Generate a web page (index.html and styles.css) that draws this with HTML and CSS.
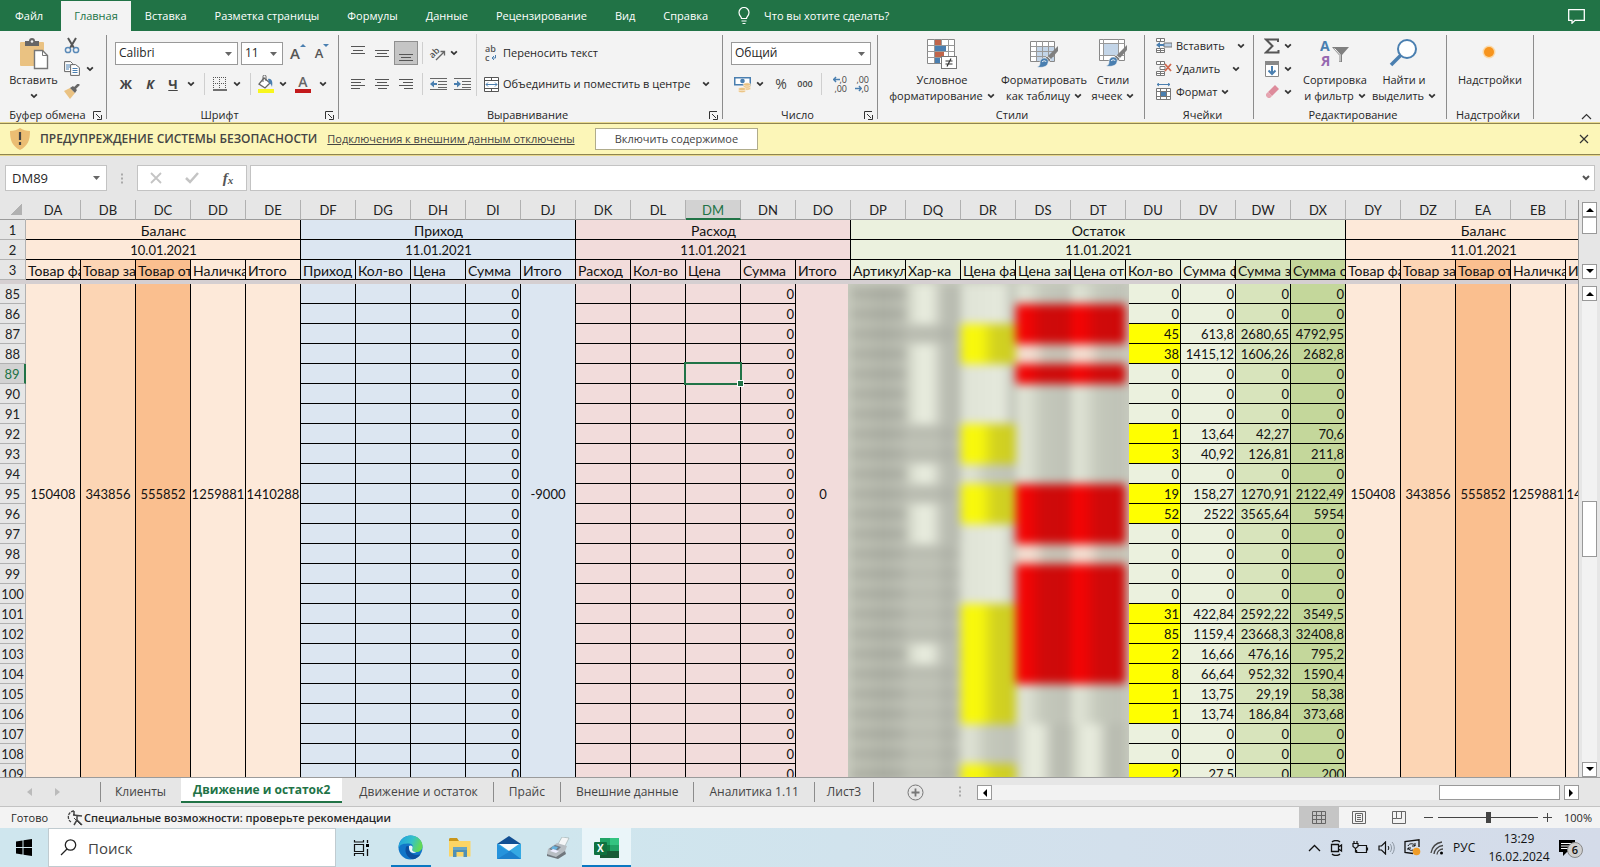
FILE: index.html
```html
<!DOCTYPE html>
<html lang="ru">
<head>
<meta charset="utf-8">
<title>Движение и остаток2 - Excel</title>
<link rel="stylesheet" href="styles.css">
</head>
<body>
<svg class="sprite" aria-hidden="true">
  <symbol id="chev" viewBox="0 0 7 5"><path d="M1 1l2.500 2.500L6 1" fill="none" stroke="#333" stroke-width="1.500"/></symbol>
  <symbol id="caret" viewBox="0 0 7 4"><path d="M0 0h7L3.500 4z" fill="#666"/></symbol>
  <symbol id="launch" viewBox="0 0 9 9"><path d="M.5 8V.5H8M3 3l4 4M8.500 4v4.500H4" fill="none" stroke="#333"/></symbol>
  <symbol id="brush" viewBox="0 0 24 24"><path d="M22 1v5l-7 8-3-3z" fill="#7f7f7f"/><path d="M11 11l4 4-2 2-4-4z" fill="#7f7f7f" stroke="#f3f3f3" stroke-width=".7"/><path d="M8 13c3 0 5 2 4 5-1 4-6 5-11 4 3-1 3-3 3-5s2-4 4-4z" fill="#4a7fb0" stroke="#f3f3f3" stroke-width=".6"/><path d="M6 17c2-2 4-1 4 0" stroke="#fff" fill="none"/></symbol>
</svg>

<nav class="tabs">
  <button class="tab file">Файл</button>
  <button class="tab active">Главная</button>
  <button class="tab">Вставка</button>
  <button class="tab">Разметка страницы</button>
  <button class="tab">Формулы</button>
  <button class="tab">Данные</button>
  <button class="tab">Рецензирование</button>
  <button class="tab">Вид</button>
  <button class="tab">Справка</button>
  <button class="tab tell"><svg width="12" height="18" viewBox="0 0 12 18"><path d="M3.500 11.500C3.500 9.500 1 9 1 5.500a5 5 0 0 1 10 0c0 3.500-2.500 4-2.500 6zM3.500 14h5M4.500 16.500h3" fill="none" stroke="#fff" stroke-width="1.200"/></svg>Что вы хотите сделать?</button>
  <button class="tab comment" aria-label="Примечания"><svg width="17" height="15" viewBox="0 0 17 15"><path d="M.7.7h15.600v10.600H7L4 14.200v-2.900H.7z" fill="none" stroke="#fff" stroke-width="1.300"/></svg></button>
</nav>

<section class="ribbon">
  <div class="group g-clip">
    <div class="body">
      <button class="big w-paste">
        <svg width="30" height="32" viewBox="0 0 30 32"><rect x="1" y="4" width="24" height="24" rx="1" fill="#eac282"/><path d="M6 8V3h4a3 3 0 0 1 6 0h4v5z" fill="#666"/><circle cx="13" cy="3.500" r="1.300" fill="#f3f3f3"/><path d="M15.500 12.500h8l5 5v13h-13z" fill="#fff" stroke="#777" stroke-width="1.400"/><path d="M23.500 12.500v5h5" fill="none" stroke="#777"/></svg>
        <span>Вставить</span><svg class="chev"><use href="#chev"/></svg>
      </button>
      <div class="stack">
        <button aria-label="Вырезать"><svg width="16" height="17" viewBox="0 0 16 17"><path d="M4 1l6 10M12 1L6 11" stroke="#555" stroke-width="2" fill="none"/><circle cx="4" cy="13" r="2.600" fill="none" stroke="#5a8ab8" stroke-width="1.500"/><circle cx="12" cy="13" r="2.600" fill="none" stroke="#5a8ab8" stroke-width="1.500"/></svg></button>
        <button aria-label="Копировать"><svg width="16" height="15" viewBox="0 0 16 15"><path d="M.6.6h6l2 2v8h-8z" fill="#fff" stroke="#666"/><path d="M2 4h4M2 6h4M2 8h3" stroke="#4a7fb0"/><path d="M6.600 3.600h5l3.800 3v7.800H6.600z" fill="#fff" stroke="#666"/><path d="M8.500 7.500h5M8.500 9.500h5M8.500 11.500h5" stroke="#4a7fb0"/></svg><svg class="chev"><use href="#chev"/></svg></button>
        <button aria-label="Формат по образцу"><svg width="16" height="15" viewBox="0 0 16 15"><path d="M0 7l6-3 5 5-5 6z" fill="#eac282"/><path d="M6 4l5 5 2-3-4-4z" fill="#666"/><path d="M10 5l5-5" stroke="#666" stroke-width="2.500"/></svg></button>
      </div>
    </div>
    <div class="title"><span>Буфер обмена</span><svg class="launch"><use href="#launch"/></svg></div>
  </div>

  <div class="group g-font">
    <div class="rows">
      <div class="row top lead">
        <label class="pick p-font"><select aria-label="Шрифт"><option>Calibri</option></select><svg class="caret"><use href="#caret"/></svg></label>
        <label class="pick p-size"><select aria-label="Размер шрифта"><option>11</option></select><svg class="caret"><use href="#caret"/></svg></label>
        <div class="row"><button class="b24 grow" aria-label="Увеличить размер шрифта">A<svg width="6" height="4" viewBox="0 0 6 4"><path d="M3 0l3 3H0z" fill="#4a7fb0"/></svg></button><button class="b24 grow small" aria-label="Уменьшить размер шрифта">A<svg width="6" height="4" viewBox="0 0 6 4"><path d="M3 3l3-3H0z" fill="#4a7fb0"/></svg></button></div>
      </div>
      <div class="row low">
        <button class="b24 glyph">Ж</button><button class="b24 glyph it">К</button><button class="b22 glyph un">Ч</button><button class="b14" aria-label="Ещё"><svg class="chev"><use href="#chev"/></svg></button>
        <i class="sep s12"></i>
        <button class="b20" aria-label="Границы"><svg width="14" height="14" viewBox="0 0 14 14"><path d="M.5 0v12M4 6.500h9M6.500 0v12M13 .5H0M12.500 0v12M0 6.500h3" stroke="#555" stroke-dasharray="1 1"/><path d="M0 13h14" stroke="#444" stroke-width="1.500"/></svg></button><button class="b14" aria-label="Ещё"><svg class="chev"><use href="#chev"/></svg></button>
        <i class="sep s12"></i>
        <button class="b20" aria-label="Цвет заливки"><svg width="18" height="18" viewBox="0 0 18 18"><path d="M7 3l6 5-5 5-6-4z" fill="#fff" stroke="#666" stroke-width="1.300"/><path d="M6 7V1.500a1.500 1.500 0 0 1 3 0V6" fill="none" stroke="#666"/><path d="M11 4c4-1 5 3 4 8-1-3-2-4-3-4z" fill="#4a7fb0"/><path d="M1 14h16v4H1z" fill="#f8f61e"/></svg></button><button class="b14" aria-label="Ещё"><svg class="chev"><use href="#chev"/></svg></button>
        <button class="b26 colorA" aria-label="Цвет текста">A</button><button class="b14" aria-label="Ещё"><svg class="chev"><use href="#chev"/></svg></button>
      </div>
    </div>
    <div class="title"><span>Шрифт</span><svg class="launch"><use href="#launch"/></svg></div>
  </div>

  <div class="group g-align">
    <div class="body">
      <div class="rows split">
        <div class="row top">
          <button class="b24" aria-label="По верхнему краю"><svg width="14" height="16"><path d="M0 1.500h14M2 5.500h10M0 8.500h14" stroke="#555"/></svg></button>
          <button class="b24" aria-label="По середине"><svg width="14" height="16"><path d="M0 5.500h14M2 8.500h10M0 11.500h14" stroke="#555"/></svg></button>
          <button class="b24 on" aria-label="По нижнему краю"><svg width="14" height="16"><path d="M0 9.500h14M2 12.500h10M0 15.500h14" stroke="#555"/></svg></button>
          <i class="sep s8"></i>
          <button class="b22" aria-label="Ориентация"><svg width="17" height="16" viewBox="0 0 17 16"><text x="0" y="11" transform="rotate(-45 5 8)" class="svgtext">ab</text><path d="M7 15l8-8M11.500 6.500H15.500V10.500" fill="none" stroke="#666" stroke-width="1.300"/></svg></button><button class="b12" aria-label="Ещё"><svg class="chev"><use href="#chev"/></svg></button>
        </div>
        <div class="row low">
          <button class="b24" aria-label="По левому краю"><svg width="14" height="12"><path d="M0 1.500h14M0 4.500h10M0 7.500h14M0 10.500h9" stroke="#555"/></svg></button>
          <button class="b24" aria-label="По центру"><svg width="14" height="12"><path d="M0 1.500h14M2 4.500h10M0 7.500h14M3 10.500h9" stroke="#555"/></svg></button>
          <button class="b24" aria-label="По правому краю"><svg width="14" height="12"><path d="M0 1.500h14M4 4.500h10M0 7.500h14M5 10.500h9" stroke="#555"/></svg></button>
          <i class="sep s8"></i>
          <button class="b24" aria-label="Уменьшить отступ"><svg width="17" height="14"><path d="M0 1.500h17M8 4.500h9M8 7.500h9M8 10.500h9M0 12.500h17" stroke="#666"/><path d="M0 7l4-3.500V6h3v2H4v2.500z" fill="#4a7fb0"/></svg></button>
          <button class="b24" aria-label="Увеличить отступ"><svg width="17" height="14"><path d="M0 1.500h17M8 4.500h9M8 7.500h9M8 10.500h9M0 12.500h17" stroke="#666"/><path d="M7 7L3 3.500V6H0v2h3v2.500z" fill="#4a7fb0"/></svg></button>
        </div>
      </div>
      <div class="rows wide">
        <div class="row top"><button class="labelled"><svg width="15" height="18" viewBox="0 0 15 18"><text x="1" y="8" class="svgtext">ab</text><text x="1" y="17" class="svgtext">c</text><path d="M11.500 11v3H8M10 12l-2 2 2 2" fill="none" stroke="#4a7fb0"/></svg>Переносить текст</button></div>
        <div class="row low"><button class="labelled"><svg width="15" height="15" viewBox="0 0 15 15"><path d="M.5.5h14v14H.5zM.5 3.500h14M.5 11.500h14M7.500 0v3M7.500 12v3" fill="#fff" stroke="#555"/><path d="M2 7.500h11M4 5.500l-2 2 2 2M11 5.500l2 2-2 2" fill="none" stroke="#4a7fb0"/></svg>Объединить и поместить в центре<svg class="chev far"><use href="#chev"/></svg></button></div>
      </div>
    </div>
    <div class="title"><span>Выравнивание</span><svg class="launch"><use href="#launch"/></svg></div>
  </div>

  <div class="group g-num">
    <div class="rows">
      <div class="row top"><label class="pick p-num"><select aria-label="Числовой формат"><option>Общий</option></select><svg class="caret"><use href="#caret"/></svg></label></div>
      <div class="row low">
        <button class="b22" aria-label="Финансовый формат"><svg width="17" height="17" viewBox="0 0 17 17"><path d="M.7 1.700h15.600v7H.7z" fill="#fff" stroke="#4a7fb0" stroke-width="1.600"/><circle cx="8.500" cy="5" r="2.300" fill="#4a7fb0"/><g fill="#eac282" stroke="#fff" stroke-width=".5"><ellipse cx="13" cy="12.500" rx="3.700" ry="1.700"/><ellipse cx="13" cy="10.500" rx="3.700" ry="1.700"/><ellipse cx="13" cy="8.500" rx="3.700" ry="1.700"/><ellipse cx="8" cy="15" rx="3.700" ry="1.700"/><ellipse cx="8" cy="13" rx="3.700" ry="1.700"/></g></svg></button><button class="b14" aria-label="Ещё"><svg class="chev"><use href="#chev"/></svg></button><button class="b28 pct">%</button><button class="b20 ooo">000</button>
        <i class="sep s12"></i>
        <button class="b22 dec" aria-label="Увеличить разрядность"><span><svg width="7" height="7"><path d="M0 3.500h7M3 1L.7 3.500 3 6" fill="none" stroke="#4a7fb0" stroke-width="1.500"/></svg>,0</span><span>,00</span></button>
        <button class="b22 dec" aria-label="Уменьшить разрядность"><span>,00</span><span><svg width="7" height="7"><path d="M0 3.500h6M4 1l2.300 2.500L4 6" fill="none" stroke="#4a7fb0" stroke-width="1.500"/></svg>,0</span></button>
      </div>
    </div>
    <div class="title"><span>Число</span><svg class="launch"><use href="#launch"/></svg></div>
  </div>

  <div class="group g-style">
    <div class="body">
      <button class="big w-cond"><svg width="30" height="32" viewBox="0 0 30 32"><path d="M.5 1.500h27v24H.5z" fill="#fff" stroke="#888"/><path d="M.5 7.500h27M.5 13.500h27M.5 19.500h27M7.500 1v24M14.500 1v24M21.500 1v24" stroke="#999"/><path d="M8 2h6v5H8zM8 14h9v5H8z" fill="#c0654b"/><path d="M8 8h11v5H8zM8 20h5v5H8z" fill="#4a7fb0"/><rect x="14.500" y="18.500" width="15" height="12" fill="#fff" stroke="#777"/><path d="M18.500 23h7M18.500 26h7M24 20.500l-4 8" stroke="#333" stroke-width="1.200"/></svg><span>Условное</span><span>форматирование <svg class="chev"><use href="#chev"/></svg></span></button>
      <button class="big w-tbl"><svg width="30" height="32" viewBox="0 0 30 32"><path d="M1.500 3.500h24v20h-24z" fill="#fff" stroke="#888"/><path d="M8 9h17v14H8z" fill="#c3d5e8"/><path d="M1.500 8.500h24M1.500 13.500h24M1.500 18.500h24M7.500 3v20M13.500 3v20M19.500 3v20" stroke="#999"/><use href="#brush" x="7" y="7" width="24" height="24"/></svg><span>Форматировать</span><span>как таблицу <svg class="chev"><use href="#chev"/></svg></span></button>
      <button class="big w-cell"><svg width="30" height="32" viewBox="0 0 30 32"><path d="M1.500 1.500h25v21h-25z" fill="#fff" stroke="#888"/><path d="M1.500 5.500h25M1.500 17.500h25M5.500 1v21M20.500 1v21" stroke="#999"/><path d="M6 6h14v11H6z" fill="#c3d5e8"/><use href="#brush" x="7" y="6" width="24" height="24"/></svg><span>Стили</span><span>ячеек <svg class="chev"><use href="#chev"/></svg></span></button>
    </div>
    <div class="title"><span>Стили</span></div>
  </div>

  <div class="group g-cells">
    <div class="body"><div class="stack">
      <button><svg width="16" height="17" viewBox="0 0 16 17"><path d="M.5 1.500h8v3h-8zM.5 11.500h8v4h-8zM4.500 1v3M4.500 11v4M.5 13.500h8" fill="#fff" stroke="#777"/><path d="M8 6h8v4H8z" fill="#b9cfe6" stroke="#777"/><path d="M0 8l4-3v2h4v2H4v2z" fill="#4a7fb0"/></svg><span>Вставить</span><svg class="chev far"><use href="#chev"/></svg></button>
      <button><svg width="16" height="17" viewBox="0 0 16 17"><path d="M.5 1.500h8v3h-8zM.5 11.500h8v4h-8zM4.500 1v3M4.500 11v4M.5 13.500h8M4 6.500h5v3H4z" fill="#fff" stroke="#777"/><path d="M9 4l6 7M15 4l-6 7" stroke="#d0694f" stroke-width="1.800"/></svg><span>Удалить</span><svg class="chev far"><use href="#chev"/></svg></button>
      <button><svg width="16" height="17" viewBox="0 0 16 17"><path d="M1 1.500h13M3 0L1 1.500 3 3M12 0l2 1.500L12 3" stroke="#4a7fb0" fill="none"/><path d="M.5 5.500h14v11H.5zM.5 8.500h14M.5 13.500h14M4.500 5v11M10.500 5v11" fill="#fff" stroke="#777"/><path d="M5 9h5v4H5z" fill="#4a7fb0"/></svg><span>Формат</span><svg class="chev"><use href="#chev"/></svg></button>
    </div></div>
    <div class="title"><span>Ячейки</span></div>
  </div>

  <div class="group g-edit">
    <div class="body">
      <div class="stack w-sum">
        <button aria-label="Автосумма"><svg width="16" height="16" viewBox="0 0 16 16"><path d="M14 4V1.500H2L8.500 8 2 14.500h12.500V12" fill="none" stroke="#555" stroke-width="2"/></svg><svg class="chev"><use href="#chev"/></svg></button>
        <button aria-label="Заполнить"><svg width="14" height="16" viewBox="0 0 14 16"><path d="M.5.5h13v15H.5z" fill="#fff" stroke="#888"/><path d="M0 0h14v4H0z" fill="#888"/><path d="M7 5v8M3.500 9.500L7 13l3.500-3.500" fill="none" stroke="#4a7fb0" stroke-width="2"/></svg><svg class="chev"><use href="#chev"/></svg></button>
        <button aria-label="Очистить"><svg width="14" height="14" viewBox="0 0 14 14"><path d="M10 0l4 4-7 7-4-4z" fill="#dd8b9b"/><path d="M3 7l4 4-2 2H3L1 11V9z" fill="#e5a4b0"/></svg><svg class="chev"><use href="#chev"/></svg></button>
      </div>
      <button class="big w-sort"><svg width="30" height="32" viewBox="0 0 30 32"><text x="0" y="13" class="az blue">А</text><text x="1" y="28" class="az purple">Я</text><path d="M12 9h17l-7 8v7h-3v-7z" fill="#7f7f7f"/><path d="M14.500 10.500l5.500 6v7" fill="none" stroke="#fff"/></svg><span>Сортировка</span><span>и фильтр <svg class="chev"><use href="#chev"/></svg></span></button>
      <button class="big w-find"><svg width="30" height="32" viewBox="0 0 30 32"><circle cx="18" cy="11" r="9" fill="#fff" stroke="#4a7fb0" stroke-width="2"/><path d="M11.500 17.500L2 27" stroke="#4a7fb0" stroke-width="3.500"/></svg><span>Найти и</span><span>выделить <svg class="chev"><use href="#chev"/></svg></span></button>
    </div>
    <div class="title"><span>Редактирование</span></div>
  </div>

  <div class="group g-add">
    <div class="body"><button class="big w-add"><svg width="30" height="32" viewBox="0 0 30 32"><circle cx="14" cy="14" r="6.500" fill="#fbd9a8"/><circle cx="14" cy="14" r="5" fill="#f7941d"/></svg><span>Надстройки</span></button></div>
    <div class="title"><span>Надстройки</span></div>
  </div>
  <button class="collapse" aria-label="Свернуть ленту"><svg width="11" height="7" viewBox="0 0 11 7"><path d="M1 6l4.500-4.500L10 6" fill="none" stroke="#333" stroke-width="1.200"/></svg></button>
</section>

<section class="warn">
  <svg width="20" height="22" viewBox="0 0 20 22"><path d="M10 0c3 2 6 3 10 3 0 9-2 15-10 19C2 18 0 12 0 3c4 0 7-1 10-3z" fill="#ebbd73"/><path d="M10 4v8M10 14v3" stroke="#444" stroke-width="2.200"/></svg>
  <b>ПРЕДУПРЕЖДЕНИЕ СИСТЕМЫ БЕЗОПАСНОСТИ</b>
  <a href="#">Подключения к внешним данным отключены</a>
  <button class="enable">Включить содержимое</button>
  <button class="close" aria-label="Закрыть"><svg width="10" height="10"><path d="M1 1l8 8M9 1L1 9" stroke="#333" stroke-width="1.200"/></svg></button>
</section>

<section class="formula">
  <label class="name"><input value="DM89" aria-label="Поле имени"><svg class="caret"><use href="#caret"/></svg></label>
  <span class="dots"></span>
  <div class="fx">
    <button aria-label="Отмена"><svg width="12" height="12"><path d="M1 1l10 10M11 1L1 11" stroke="#c4c4c4" stroke-width="1.800"/></svg></button>
    <button aria-label="Ввод"><svg width="14" height="12"><path d="M1 6l4 4 8-9" fill="none" stroke="#c4c4c4" stroke-width="2.500"/></svg></button>
    <button class="f"><i>f</i><i class="x">x</i></button>
  </div>
  <label class="entry"><input aria-label="Строка формул"><svg width="8" height="6"><path d="M1 1l3 3 3-3" fill="none" stroke="#555" stroke-width="2"/></svg></label>
</section>

<main class="sheet">
  <div class="pane">
    <table class="grid" id="head"></table>
    <div class="freeze"></div>
    <div class="scrolling">
      <table class="grid" id="cells"></table>
      <div class="veil"><div class="smudge" id="smudge"></div></div>
    </div>
  </div>
  <div class="vbars">
    <div class="vbar upper"><button aria-label="Вверх"><svg width="8" height="5"><path d="M0 5l4-4 4 4z"/></svg></button><div class="thumb"></div><div class="space"></div><button aria-label="Вниз"><svg width="8" height="5"><path d="M0 0l4 4 4-4z"/></svg></button></div>
    <div class="vbar lower"><button aria-label="Вверх"><svg width="8" height="5"><path d="M0 5l4-4 4 4z"/></svg></button><div class="space before"></div><div class="thumb"></div><div class="space"></div><button aria-label="Вниз"><svg width="8" height="5"><path d="M0 0l4 4 4-4z"/></svg></button></div>
  </div>
</main>

<nav class="sheets">
  <div class="arrows"><svg width="5" height="8"><path d="M5 0v8L0 4z" fill="#bbb"/></svg><svg width="5" height="8"><path d="M0 0v8l5-4z" fill="#bbb"/></svg></div>
  <button class="first">Клиенты</button>
  <button class="active">Движение и остаток2</button>
  <button class="line next">Движение и остаток</button>
  <button class="line">Прайс</button>
  <button class="line">Внешние данные</button>
  <button class="line">Аналитика 1.11</button>
  <button class="line last">Лист3</button>
  <button class="plus" aria-label="Новый лист"><svg width="17" height="17" viewBox="0 0 17 17"><circle cx="8.500" cy="8.500" r="7.500" fill="none" stroke="#777"/><path d="M8.500 4.500v8M4.500 8.500h8" stroke="#777" stroke-width="1.800"/></svg></button>
  <span class="dots"></span>
  <div class="hbar"><button aria-label="Влево"><svg width="5" height="8"><path d="M5 0v8L1 4z"/></svg></button><div class="space"></div><div class="thumb"></div><button aria-label="Вправо"><svg width="5" height="8"><path d="M0 0v8l4-4z"/></svg></button></div>
</nav>

<footer class="status">
  <span class="ready">Готово</span>
  <button class="access"><svg width="17" height="16" viewBox="0 0 17 16"><path d="M8 1a6 6 0 0 0-3 11" fill="none" stroke="#444" stroke-width="1.300" stroke-dasharray="3 1"/><path d="M7 5l9 1M11 6v4l-3 5M11 10l5 5M8 1v4" stroke="#444" stroke-width="1.500" fill="none"/><path d="M8 8l7 7" stroke="#444"/></svg>Специальные возможности: проверьте рекомендации</button>
  <div class="views">
    <button class="on" aria-label="Обычный"><svg width="14" height="13"><path d="M.5.5h13v12H.5zM.5 4.500h13M.5 8.500h13M4.500 0v12M9.500 0v12" fill="none" stroke="#666"/></svg></button>
    <button aria-label="Разметка страницы"><svg width="14" height="13"><path d="M.5.5h13v12H.5zM3.500 2.500h7v8h-7zM5 4.500h4M5 6.500h4M5 8.500h4" fill="none" stroke="#666"/></svg></button>
    <button aria-label="Страничный режим"><svg width="14" height="13"><path d="M.5.500h13v12H.5zM4.500 0v7.500h5V0M.5 7.500h4" fill="none" stroke="#666"/></svg></button>
  </div>
  <button class="zoomb" aria-label="Уменьшить"><svg width="9" height="9"><path d="M0 4.500h9" stroke="#444"/></svg></button>
  <input class="zoom" type="range" min="0" max="100" value="50" aria-label="Масштаб">
  <button class="zoomb" aria-label="Увеличить"><svg width="9" height="9"><path d="M0 4.500h9M4.500 0v9" stroke="#444"/></svg></button>
  <span class="pc">100%</span>
</footer>

<footer class="taskbar">
  <button class="start" aria-label="Пуск"><svg width="16" height="17" viewBox="0 0 16 17"><path d="M0 2.500L6.500 1.500V8H0zM7.500 1.300L16 0v8H7.500zM0 9h6.500v6.500L0 14.500zM7.500 9H16v8l-8.500-1.300z"/></svg></button>
  <label class="search"><svg width="17" height="17" viewBox="0 0 17 17"><circle cx="10.500" cy="6" r="5.200" fill="none" stroke="#222" stroke-width="1.300"/><path d="M7 10l-6 6" stroke="#222" stroke-width="1.300"/></svg><input placeholder="Поиск" aria-label="Поиск"></label>
  <button class="app" aria-label="Представление задач"><svg width="17" height="16" viewBox="0 0 17 16"><path d="M1.500 4.500h9v7h-9zM1.500 0v2h9V0M1.500 16v-2.500h9V16" fill="none" stroke="#111" stroke-width="1.200"/><path d="M14.500 0v3M14.500 9v7" stroke="#111" stroke-width="1.300"/><path d="M13 4h3v3h-3z"/></svg></button>
  <button class="app open" aria-label="Edge"><svg width="25" height="25" viewBox="0 0 25 25"><defs><linearGradient id="ea" x1="0" x2="1" y1="0" y2=".3"><stop offset="0" stop-color="#1d9fe0"/><stop offset=".6" stop-color="#35c1c9"/><stop offset="1" stop-color="#62d957"/></linearGradient></defs><circle cx="12.500" cy="12.500" r="12" fill="#1176c8"/><path d="M.7 11C2 4 7 .5 12.500.5c7 0 12 5 12 10.500 0 4-3 6-6 6-4 0-5-2-4-3.500 1-2 0-5-3.500-5C6 8.500 2 9 .7 13z" fill="url(#ea)"/><path d="M8 12c-2 6 2 11.500 7 12.200 3-.5 6-2.200 7.500-5C16 21.500 10 18 11 11.500 10 10.500 8.500 11 8 12z" fill="#0b4f9f"/><path d="M11 11c1.500-1.500 4.500 0 3.500 2.500C13.500 15.500 15 17 18.500 17c-4 2.500-8 0-7.500-6z" fill="#e8f6fb"/></svg></button>
  <button class="app" aria-label="Проводник"><svg width="22" height="19" viewBox="0 0 22 19"><path d="M0 1.500C0 .5.500 0 1.500 0H8l2 3H0z" fill="#c9961b"/><path d="M0 3h21.500v15.500H0z" fill="#fbd565"/><path d="M4 9h14v10h-3.500v-5h-7v5H4z" fill="#4f8fb3"/><path d="M4 9h14v3H4z" fill="#67a5c4"/></svg></button>
  <button class="app" aria-label="Почта"><svg width="24" height="23" viewBox="0 0 24 23"><path d="M0 8l12-8 12 8v3H0z" fill="#124f93"/><path d="M0 8v15h24V8z" fill="#35a9e3"/><path d="M0 23l12-9 12 9z" fill="#1c80cc"/><path d="M0 8l12 8L0 23z" fill="#2593dc"/><path d="M2 8h20l-10 7z" fill="#f8fbfd"/></svg></button>
  <button class="app" aria-label="Факс"><svg width="24" height="22" viewBox="0 0 24 22"><path d="M12 7l4-7 7 1-5 10z" fill="#f4f6f7" stroke="#9aa" stroke-width=".6"/><path d="M2 12l9-6 10 3-3 8-7 4-10-4z" fill="#b8bec3"/><path d="M3 12l6-4 6 2-5 5z" fill="#6f7b86"/><path d="M7 9l5 1-2 3-5-1z" fill="#67b2dd"/><path d="M1 17l9 3 9-6 1 3-8 5L1 19z" fill="#70777d"/><path d="M4 14l6 2 3-2-6-2z" fill="#eef"/></svg></button>
  <button class="app open cur" aria-label="Excel"><svg width="25" height="22" viewBox="0 0 25 22"><path d="M6 1h19v20H6z" fill="#107c41"/><path d="M6 1h10v7H6z" fill="#21a366"/><path d="M16 1h9v7h-9z" fill="#33c481"/><path d="M16 8h9v6h-9z" fill="#21a366"/><path d="M6 14h19v7H6z" fill="#185c37"/><rect y="5" width="13" height="13" rx="1" fill="#107240"/><text x="3" y="15" class="xl">X</text></svg></button>
  <div class="tray">
    <svg width="13" height="8" viewBox="0 0 13 8"><path d="M1 7l5.500-5.500L12 7" fill="none" stroke="#111" stroke-width="1.300"/></svg>
    <svg width="13" height="16" viewBox="0 0 13 16"><path d="M1.500 4.500h7v7h-7zM8.500 7l3-2v6l-3-2M2 2C4 0 8 0 10 2M2 14c2 2 6 2 8 0" fill="none" stroke="#111" stroke-width="1.300"/></svg>
    <svg width="17" height="13" viewBox="0 0 17 13"><path d="M6 4.500h8.500v7H4.500V9M15.500 6.500v3M1 2.500h5v3L3.500 7.500 1 5.500zM2 0v2M5 0v2M3.500 8v3h2" fill="none" stroke="#111" stroke-width="1.200"/></svg>
    <svg width="17" height="14" viewBox="0 0 17 14"><path d="M1 5h2.500L7.500 1v12l-4-4H1z" fill="none" stroke="#111" stroke-width="1.200"/><path d="M10 5c1 1 1 3 0 4" fill="none" stroke="#111"/><path d="M12 3c2 2 2 6 0 8M14 1c3 3 3 9 0 12" fill="none" stroke="#8b95a0"/></svg>
    <svg width="17" height="17" viewBox="0 0 17 17"><path d="M9 14.500l-8-1v-11L15 .8V8" fill="none" stroke="#111" stroke-width="1.300"/><path d="M4 7c1-3 6-3 7 0M11 4v3H8M4 11V9h3M4 9c1 2 3 3 5 2" fill="none" stroke="#111"/><circle cx="12.500" cy="12.500" r="3.800" fill="#ef9c28"/></svg>
    <svg width="14" height="14" viewBox="0 0 14 14"><path d="M1 12C2 6 6 2 12 1M4 13c0-4 4-8 9-8.500M7 13.500c0-3 3-5.500 6-5.500" fill="none" stroke="#444" stroke-width="1.300"/><circle cx="11.500" cy="12" r="1.500"/></svg>
    <span class="lang">РУС</span>
    <div class="clock"><span>13:29</span><span>16.02.2024</span></div>
    <div class="note"><svg width="16" height="16" viewBox="0 0 16 16"><path d="M0 0h16v12H8l-4 4v-4H0z"/><path d="M2 3.500h12M2 6h12M2 8.500h8" stroke="#fff"/></svg><span class="badge">6</span></div>
  </div>
</footer>
<script src="app.js"></script>
</body>
</html>
```

FILE: styles.css
```css
* { box-sizing: border-box; }
body {
  margin: 0; height: 100vh; display: flex; flex-direction: column; overflow: hidden;
  font: 11px/16px "Open Sans", "Noto Sans", sans-serif; color: #262626; background: #e6e6e6;
}
button { font: inherit; color: inherit; background: none; border: 0; padding: 0; margin: 0; white-space: nowrap; }
input, select { font: inherit; color: inherit; border: 0; padding: 0; margin: 0; background: none; outline: 0; min-width: 0; }
svg { flex: none; display: block; }
.sprite { position: absolute; width: 0; height: 0; }
.chev { width: 8px; height: 6px; }
.caret { width: 7px; height: 4px; }
.launch { width: 9px; height: 9px; }
.svgtext { font: 600 9px "Open Sans", sans-serif; fill: #555; }

.tabs { flex: none; height: 31px; background: #217346; color: #fff; display: flex; padding-top: 1px; }
.tab { padding: 0 14px; }
.tab.file { padding: 0 18px 0 15px; }
.tab.active { background: #f3f3f3; color: #217346; padding: 0 13px; }
.tab.tell { display: flex; align-items: center; gap: 14px; padding-left: 16px; }
.tab.comment { margin-left: auto; padding-right: 15px; }

.ribbon { flex: none; height: 92px; background: #f3f3f3; display: flex; padding-top: 3px; }
.group { display: flex; flex-direction: column; padding: 0 0 0 7px; position: relative; }
.group::after { content: ""; position: absolute; right: 0; top: 1px; bottom: 4px; width: 1px; background: #8c8c8c; }
.body { flex: 1; display: flex; align-items: flex-start; }
.rows { flex: 1; }
.title { height: 16px; display: flex; align-items: center; padding-right: 5px; }
.title span { flex: 1; text-align: center; }
.row { display: flex; align-items: center; }
.row.top { height: 38px; }
.row.low { height: 24px; }
.row button { height: 24px; display: flex; align-items: center; justify-content: center; flex: none; }
.lead { gap: 3px; padding-left: 1px; }
.b12 { width: 12px; } .b14 { width: 14px; } .b20 { width: 20px; } .b22 { width: 22px; }
.b24 { width: 24px; } .b26 { width: 26px; } .b28 { width: 28px; }
.on { background: #c5c5c5; outline: 1px solid #8f8f8f; outline-offset: -1px; }
.sep { display: flex; justify-content: center; height: 22px; }
.sep::before { content: ""; width: 1px; background: #cfcfcf; }
.s8 { width: 8px; } .s12 { width: 12px; }
.stack { display: flex; flex-direction: column; }
.stack button { height: 23px; display: flex; align-items: center; gap: 4px; }
.big { display: flex; flex-direction: column; align-items: center; padding-top: 4px; }
.big > svg:first-child { margin-bottom: 2px; }
.big span { display: flex; align-items: center; gap: 4px; }
.big > .chev { margin-top: 5px; }

.g-clip { width: 107px; }
.g-clip .title { padding-left: 0; margin-left: -5px; }
.g-clip .stack button { gap: 6px; }
.w-paste { width: 53px; margin-right: 4px; }
.g-font { width: 232px; }
.g-align { width: 384px; }
.g-num { width: 155px; padding-left: 8px; }
.g-style { width: 267px; padding-left: 6px; }
.g-cells { width: 109px; padding-left: 11px; }
.g-edit { width: 193px; padding-left: 10px; }
.g-add { width: 87px; padding-left: 0; }
.w-cond { width: 116px; } .w-tbl { width: 88px; } .w-cell { width: 50px; }
.w-sum { width: 37px; } .w-sum svg:first-child { width: 16px; } .w-sort { width: 68px; } .w-find { width: 70px; } .w-add { width: 86px; }
.split { flex: none; width: 131px; border-right: 1px solid #cfcfcf; }
.wide { padding-left: 7px; }
.labelled { gap: 4px; }
.far { margin-left: 8px; }

.pick { position: relative; height: 23px; display: flex; align-items: center; background: #fff; border: 1px solid #999; font-size: 12px; }
.pick select { appearance: none; width: 100%; padding-left: 3px; }
.pick .caret { position: absolute; right: 5px; top: 9px; pointer-events: none; }
.p-font { width: 123px; } .p-size { width: 42px; } .p-num { width: 140px; }
.grow { font-size: 15px; font-weight: 600; color: #555; }
.grow svg { align-self: flex-start; margin-top: 3px; }
.grow.small { font-size: 13px; }
.glyph { font-size: 13px; font-weight: 700; color: #444; }
.it { font-style: italic; }
.un { text-decoration: underline; }
.colorA { font-size: 14px; font-weight: 600; color: #666; line-height: 14px; }
.row .colorA { height: 18px; background: linear-gradient(#c3191b, #c3191b) center bottom / 16px 4px no-repeat; align-items: flex-start; }
.pct { font-size: 14px; color: #444; }
.ooo { font-size: 9px; font-weight: 600; color: #444; }
.row .dec { flex-direction: column; font-size: 9px; line-height: 9px; color: #444; align-items: flex-end; padding-right: 2px; }
.dec span { display: flex; align-items: center; }
.az { font: bold 14px "Open Sans", sans-serif; }
.blue { fill: #4a7fb0; } .purple { fill: #9668b0; }
.collapse { margin-left: auto; align-self: flex-end; padding: 0 8px 3px 0; }

.warn { flex: none; height: 32px; margin-bottom: 1px; background: #fcf6b8; border: solid #8f8550; border-width: 1px 0; box-shadow: 0 0 0 1px #e9d98f; display: flex; align-items: center; padding: 0 10px; color: #444; }
.warn b { margin: 0 10px; font-size: 12px; font-weight: 600; }
.warn a { color: #444; }
.enable { height: 22px; padding: 0 19px; margin-left: 20px; background: #fff; border: 1px solid #b0ac8c; }
.close { margin-left: auto; padding-right: 1px; }

.formula { flex: none; height: 44px; display: flex; align-items: center; padding: 0 5px; }
.name, .fx, .entry { height: 26px; background: #fff; border: 1px solid #c3c3c3; display: flex; align-items: center; }
.name { width: 102px; font-size: 13px; padding: 0 6px; }
.name input { flex: 1; }
.dots { width: 30px; height: 11px; background: radial-gradient(circle, #aaa 1px, transparent 1px) center / 30px 4px; }
.fx { width: 110px; }
.fx button { flex: 1; display: flex; justify-content: center; align-items: center; height: 100%; }
.fx .f { font: bold 15px "Liberation Serif", serif; color: #555; }
.f .x { font-size: 11px; padding-top: 3px; }
.entry { flex: 1; margin-left: 3px; padding: 0 4px; }
.entry input { flex: 1; }

.sheet { flex: 1; min-height: 0; display: flex; border-bottom: 1px solid #9b9b9b; }
.pane { flex: 1; min-width: 0; overflow: hidden; display: flex; flex-direction: column; border-right: 1px solid #9b9b9b; }
.freeze { flex: none; height: 4px; background: #d5cfd1; }
.scrolling { flex: 1; min-height: 0; overflow: hidden; position: relative; }
.grid { flex: none; table-layout: fixed; border-collapse: separate; border-spacing: 0; font: 13px/17px Lato, "Open Sans", sans-serif; color: #111; width: 1621px; }
.grid col { width: 55px; }
.grid col.num { width: 26px; }
.grid th, .grid td { height: 20px; padding: 2px 0 0; overflow: hidden; white-space: nowrap; border: solid #000; border-width: 0 1px 1px 0; font-weight: 400; }
.grid td { padding: 2px 1px 0 2px; text-align: left; }
.grid td.n { text-align: right; }
.grid td.c { text-align: center; }
.grid td.t { font-size: 14px; }
.grid td.m { vertical-align: top; padding: 202px 0 0; text-align: center; border-bottom: 0; }
.grid th { background: #e6e6e6; border-color: #b1b1b1; text-align: center; color: #222; }
.grid thead th { border-bottom-color: #9b9b9b; }
.grid th.sel { background: #d2d2d2; color: #217346; }
.grid thead th.sel { border-bottom: 2px solid #217346; line-height: 16px; }
.grid tbody th.sel { border-right: 2px solid #217346; }
.grid th.corner { background: linear-gradient(135deg, transparent 50%, #b1b1b1 50%) 11px 4px / 11px 11px no-repeat #e6e6e6; border-right-color: #e6e6e6; }
.o1 { background: #fde9d9; } .o2 { background: #fcd5b4; } .o3 { background: #fabf8f; }
.bl { background: #dce6f1; } .pk { background: #f2dcdb; }
.g1 { background: #ebf1de; } .g2 { background: #d8e4bc; } .g3 { background: #c4d79b; }
.grid td.yl { background: #ff0; }
.grid td.cursor { position: relative; overflow: visible; }
.cursor::before { content: ""; position: absolute; inset: -2px; border: 2px solid #217346; }
.cursor::after { content: ""; position: absolute; right: -3px; bottom: -3px; width: 5px; height: 5px; background: #217346; outline: 1px solid #fff; }
.veil { position: absolute; left: 848px; top: 0; bottom: 0; width: 281px; overflow: hidden; background: #c9ccc0; }
.smudge { padding-left: 3px; filter: blur(5px); display: grid; grid-template-columns: repeat(5, 55px); grid-auto-rows: 20px; width: 290px; }
.dark { background: linear-gradient(#0000, #0002 50%, #0000), linear-gradient(90deg, #c3c6b9 15%, #babdb1 60%, #c3c6ba); }
.mid { background: linear-gradient(#0000, #0001 50%, #0000), linear-gradient(90deg, #c3c6ba 55%, #b6b9ae 75%, #c6c9bd); }
.gap { background: linear-gradient(90deg, #cfd3c5 5%, #e8ecde 25%, #e6eadc 45%, #b9bcb1 70%, #b9bcb1 95%); }
.pale { background: linear-gradient(90deg, #dfe3d6, #e5e9dc 75%, #bcbfb4 98%); }
.half { background: linear-gradient(90deg, #dde1d3 20%, #c4c8bb 50%, #bec1b6); }
.yel { background: linear-gradient(90deg, #f8f80c 35%, #d3d31f 60%, #cccc25); }
.red { background: linear-gradient(90deg, #f40404 20%, #ce0a0a 50%, #cf0909); }
.pink { background: linear-gradient(90deg, #f3dccf 30%, #c6c1b4 55%); }

.vbars { width: 21px; flex: none; display: flex; flex-direction: column; padding: 2px 3px 0; }
.vbar { display: flex; flex-direction: column; width: 15px; }
.vbar.upper { height: 77px; margin-bottom: 7px; }
.vbar.lower { flex: 1; }
.vbar button, .hbar button { width: 15px; height: 15px; flex: none; background: #fff; border: 1px solid #999; display: flex; align-items: center; justify-content: center; }
.thumb { background: #fff; border: 1px solid #999; flex: none; }
.upper .thumb { height: 17px; }
.lower .thumb { height: 56px; }
.space { flex: 1; background: #f2f2f2; }
.upper .space { background: #e6e6e6; }
.lower .before { flex: 200 0 0; }
.lower .thumb + .space { flex: 206 0 0; }

.sheets { flex: none; height: 28px; display: flex; font-size: 12px; color: #444; }
.arrows { width: 101px; display: flex; gap: 23px; align-items: center; padding-left: 27px; margin: 4px 0; border-right: 1px solid #8c8c8c; flex: none; }
.sheets > button { padding: 0 15px; margin: 4px 0; display: flex; align-items: center; flex: none; }
.sheets > .first { padding-left: 14px; }
.sheets > .active { margin: 0 0 3px; padding: 0 12px; background: #fff; color: #217346; font-weight: 700; border-bottom: 2px solid #217346; }
.sheets > .line { border-right: 1px solid #8c8c8c; }
.sheets > .next { padding-left: 17px; }
.sheets > .last { padding: 0 12px; }
.sheets > .plus { padding: 0; margin-left: 33px; }
.sheets .dots { margin: 8px 0 0 21px; width: 30px; }
.hbar { flex: 1; display: flex; align-items: center; height: 15px; margin: 7px 21px 0 auto; max-width: 602px; }
.hbar .space { height: 15px; }
.hbar .thumb { width: 121px; height: 15px; margin-right: 4px; }

.status { flex: none; height: 22px; background: #f3f3f3; border-top: 1px solid #c3c3c3; display: flex; align-items: center; padding-right: 8px; }
.ready { padding: 0 18px 0 11px; }
.access { display: flex; align-items: center; gap: 1px; font-weight: 600; }
.views { margin-left: auto; display: flex; margin-right: 5px; }
.views button { width: 40px; height: 21px; display: flex; align-items: center; justify-content: center; }
.views .on { outline: 0; }
.zoomb { width: 9px; }
.zoom { appearance: none; width: 100px; height: 12px; margin: 0 5px; background: linear-gradient(#444, #444) center / 100% 1px no-repeat; }
.zoom::-webkit-slider-thumb { appearance: none; width: 5px; height: 11px; background: #444; }
.pc { margin-left: 12px; }

.taskbar { flex: none; height: 39px; background: linear-gradient(90deg, #cfe6ee, #cfe6ee 35%, #d3e0ec 70%, #d4dbe9); display: flex; color: #111; }
.start { width: 48px; display: flex; align-items: center; justify-content: center; }
.search { width: 288px; margin-right: 1px; background: #fff; border: 1px solid #c0cbd0; display: flex; align-items: center; gap: 11px; padding-left: 11px; font-size: 15px; }
.search input { flex: 1; }
.search input::placeholder { color: #444; opacity: 1; }
.app { width: 49px; display: flex; align-items: center; justify-content: center; }
.app.open { background: linear-gradient(#0a78c2, #0a78c2) center bottom / 40px 2px no-repeat; }
.app.open.cur { background: linear-gradient(#0a78c2, #0a78c2) center bottom / 100% 2px no-repeat #eaf5f9; }
.xl { font: bold 10px "Open Sans", sans-serif; fill: #fff; }
.tray { margin-left: auto; display: flex; align-items: center; gap: 9px; padding-right: 16px; font-size: 12px; }
.clock { display: flex; flex-direction: column; align-items: center; line-height: 18px; width: 62px; }
.note { position: relative; width: 25px; }
.lang { width: 26px; }
.badge { position: absolute; left: 8px; top: 2px; width: 16px; height: 16px; border-radius: 8px; background: #d0d0d0; border: 1px solid #888; text-align: center; font-size: 11px; line-height: 14px; font-weight: 600; }
```

FILE: app.js
```js
const letters = ['DA','DB','DC','DD','DE','DF','DG','DH','DI','DJ','DK','DL','DM','DN','DO','DP','DQ','DR','DS','DT','DU','DV','DW','DX','DY','DZ','EA','EB',''];
const blocks = [
  ['Баланс', '10.01.2021', 5, 'o1'],
  ['Приход', '11.01.2021', 5, 'bl'],
  ['Расход', '11.01.2021', 5, 'pk'],
  ['Остаток', '11.01.2021', 9, 'g1'],
  ['Баланс', '11.01.2021', 5, 'o1']
];
const names = ['Товар фа','Товар за','Товар от','Наличка','Итого','Приход','Кол-во','Цена','Сумма','Итого','Расход','Кол-во','Цена','Сумма','Итого','Артикул','Хар-ка','Цена фа','Цена зак','Цена отп','Кол-во','Сумма ф','Сумма з','Сумма о','Товар фа','Товар за','Товар от','Наличка','Итого'];
const tint = ['o1','o2','o3','o1','o1','bl','bl','bl','bl','bl','pk','pk','pk','pk','pk','g1','g1','g1','g1','g1','g1','g1','g2','g3','o1','o2','o3','o1','o1'];
const merged = { 0: '150408', 1: '343856', 2: '555852', 3: '1259881', 4: '1410288', 9: '-9000', 14: '0', 24: '150408', 25: '343856', 26: '555852', 27: '1259881', 28: '1410288' };
const stock = {
  87: ['45','613,8','2680,65','4792,95'], 88: ['38','1415,12','1606,26','2682,8'],
  92: ['1','13,64','42,27','70,6'], 93: ['3','40,92','126,81','211,8'],
  95: ['19','158,27','1270,91','2122,49'], 96: ['52','2522','3565,64','5954'],
  101: ['31','422,84','2592,22','3549,5'], 102: ['85','1159,4','23668,3','32408,8'],
  103: ['2','16,66','476,16','795,2'], 104: ['8','66,64','952,32','1590,4'],
  105: ['1','13,75','29,19','58,38'], 106: ['1','13,74','186,84','373,68'],
  109: ['2','27,5','0','200']
};
const first = 85, last = 109;
const cols = '<colgroup><col class="num">' + '<col>'.repeat(29) + '</colgroup>';

let head = cols + '<thead><tr><th class="corner"></th>' +
  letters.map(l => `<th${l === 'DM' ? ' class="sel"' : ''}>${l}</th>`).join('') + '</tr></thead><tbody>';
for (const k of [0, 1]) {
  head += `<tr><th>${k + 1}</th>` + blocks.map(b => `<td class="c ${k ? '' : 't '}${b[3]}" colspan="${b[2]}">${b[k]}</td>`).join('') + '</tr>';
}
head += '<tr><th>3</th>' + names.map((n, i) => `<td class="t ${tint[i]}">${n}</td>`).join('') + '</tr></tbody>';
document.getElementById('head').innerHTML = head;

let body = cols + '<tbody>';
for (let r = first; r <= last; r++) {
  body += `<tr><th${r === 89 ? ' class="sel"' : ''}>${r}</th>`;
  for (let c = 0; c < 29; c++) {
    if (c in merged) {
      if (r === first) body += `<td class="m ${tint[c]}" rowspan="${last - first + 1}">${merged[c]}</td>`;
    } else if (c >= 20 && c <= 23) {
      const row = stock[r];
      body += `<td class="n ${tint[c]}${row && c === 20 ? ' yl' : ''}">${row ? row[c - 20] : '0'}</td>`;
    } else {
      const cursor = r === 89 && c === 12 ? ' cursor' : '';
      body += `<td class="n ${tint[c]}${cursor}">${c === 8 || c === 13 ? '0' : ''}</td>`;
    }
  }
  body += '</tr>';
}
document.getElementById('cells').innerHTML = body + '</tbody>';

const gaps = [85, 86, 88, 89, 90, 91, 94, 96, 97, 103];
const reds = [86, 87, 89, 95, 96, 97, 99, 100, 101, 102, 103, 104];
let smudge = '';
for (let r = first; r <= last; r++) {
  const price = reds.includes(r) ? 'red' : (r === 88 || r === 98) ? 'pink' : r >= 107 ? 'gap' : 'half';
  const fact = stock[r] ? 'yel' : r === 94 || r > 106 ? 'half' : 'pale';
  for (const k of ['dark', gaps.includes(r) ? 'gap' : 'mid', fact, price, price]) smudge += `<div class="${k}"></div>`;
}
document.getElementById('smudge').innerHTML = smudge;
```
